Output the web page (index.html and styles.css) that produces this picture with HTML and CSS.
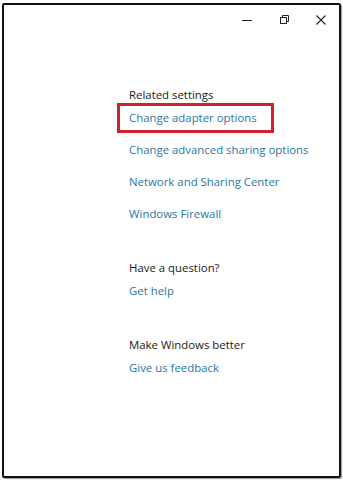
FILE: index.html
```html
<!DOCTYPE html>
<html lang="en">
<head>
<meta charset="utf-8">
<title>Network settings</title>
<link rel="stylesheet" href="styles.css">
</head>
<body>
<div class="window">
  <div class="titlebar">
    <span class="ctl">
      <svg width="12" height="12" viewBox="0 0 12 12"><path d="M1 6.5h10" stroke="#222" stroke-width="1"/></svg>
    </span>
    <span class="ctl">
      <svg width="12" height="12" viewBox="0 0 12 12" fill="none" stroke="#222" stroke-width="1"><rect x="2.5" y="3.5" width="6" height="6"/><path d="M4.5 3.5V1.5h6v6h-2"/></svg>
    </span>
    <span class="ctl">
      <svg width="12" height="12" viewBox="0 0 12 12" stroke="#222" stroke-width="1.1"><path d="M1.5 1.5l9 9M10.5 1.5l-9 9"/></svg>
    </span>
  </div>
  <div class="content">
    <section class="group">
      <h2 class="heading">Related settings</h2>
      <a class="link highlighted" href="#">Change adapter options</a>
      <a class="link" href="#">Change advanced sharing options</a>
      <a class="link" href="#">Network and Sharing Center</a>
      <a class="link" href="#">Windows Firewall</a>
    </section>
    <section class="group">
      <h2 class="heading">Have a question?</h2>
      <a class="link" href="#">Get help</a>
    </section>
    <section class="group">
      <h2 class="heading">Make Windows better</h2>
      <a class="link" href="#">Give us feedback</a>
    </section>
  </div>
</div>
</body>
</html>
```
FILE: styles.css
```css
html, body {
  margin: 0;
  padding: 0;
  background: #fff;
}
body {
  font-family: "Open Sans", "Noto Sans", sans-serif;
  font-size: 11.4px;
  color: #111;
  padding: 3px 2px 2px 2px;
}
.window {
  box-sizing: border-box;
  width: 339px;
  height: 475px;
  border: 2px solid #111;
  border-radius: 2px;
  box-shadow: 1px 1px 1px rgba(0,0,0,0.4);
}
.titlebar {
  display: flex;
  justify-content: flex-end;
  height: 30px;
  padding-right: 0;
}
.ctl {
  width: 37px;
  display: flex;
  align-items: center;
  justify-content: center;
}
.ctl svg { display: block; }
.content {
  padding: 52px 0 0 125px;
  display: flex;
  flex-direction: column;
  gap: 38px;
}
.group {
  display: flex;
  flex-direction: column;
  align-items: flex-start;
}
.heading {
  margin: 0;
  font-weight: normal;
  font-size: 11.4px;
  line-height: 16px;
  color: #1a1a1a;
}
.link {
  color: #2a76a3;
  text-decoration: none;
  line-height: 16px;
  margin-top: 16px;
}
.heading + .link { margin-top: 7px; }
.highlighted {
  position: relative;
}
.highlighted::after {
  content: "";
  position: absolute;
  top: -7px;
  bottom: -7px;
  left: -12px;
  right: -17px;
  border: 3px solid #d0202e;
}
```
